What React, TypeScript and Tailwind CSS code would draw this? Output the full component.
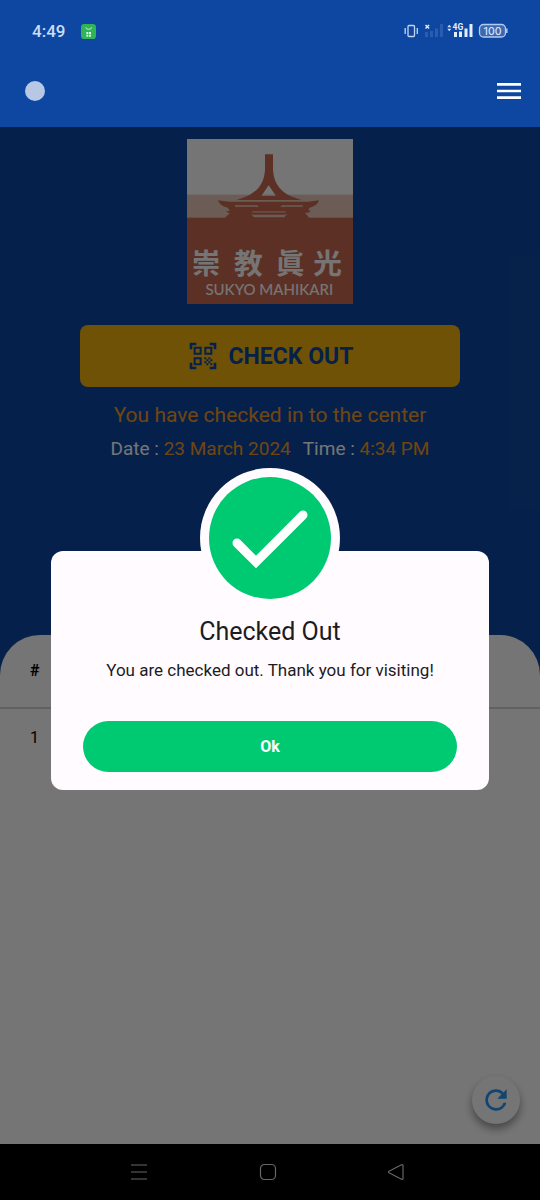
import React from "react";
import { MdMenu, MdQrCodeScanner, MdRefresh } from "react-icons/md";

function StatusIcons() {
  return (
    <svg width="104" height="18" viewBox="0 0 104 18" fill="none" aria-label="Vibrate, signal, battery 100">
      <g stroke="#c3d5f2" strokeWidth="1.3">
        <rect x="4" y="3.5" width="6.5" height="11" rx="1" />
        <path d="M1.2 6v6M13.3 6v6" />
      </g>
      <path d="M21.5 3l3.6 3.6M25.1 3l-3.6 3.6" stroke="#e3edfb" strokeWidth="1.4" />
      <g fill="#2a5db0">
        <rect x="21" y="10" width="3" height="5" />
        <rect x="26" y="9" width="3" height="6" />
        <rect x="31" y="6.5" width="3" height="8.5" />
        <rect x="36" y="2" width="3" height="13" />
      </g>
      <path d="M43.3 5.2l2-2.5 2 2.5zM43.3 6.8l2 2.5 2-2.5z" fill="#dbe7fa" />
      <text x="48.5" y="8" fontSize="8.5" fontWeight="700" fontFamily="Roboto, sans-serif" fill="#e3edfb">4G</text>
      <g fill="#e3edfb">
        <rect x="50" y="10" width="3" height="5" />
        <rect x="55" y="9.5" width="3" height="5.5" />
        <rect x="60.5" y="6.5" width="3" height="8.5" />
        <rect x="65.5" y="2" width="3" height="13" />
      </g>
      <rect x="75.5" y="2.5" width="26" height="12.5" rx="4" stroke="#b4c9ec" strokeWidth="1.3" fill="#3c68b3" />
      <path d="M102.8 6.5v4.5" stroke="#b4c9ec" strokeWidth="1.5" />
      <text x="88.5" y="12.6" textAnchor="middle" fontSize="10.5" fontWeight="500" fontFamily="Inter, sans-serif" fill="#d6e3f7">100</text>
    </svg>
  );
}

function AppBadge() {
  return (
    <svg width="15" height="15" viewBox="0 0 45 45" aria-hidden="true">
      <rect width="45" height="45" rx="10" fill="#2fb457" />
      <path d="M14 10q1 6 9 6t9-6" stroke="#c5f0cc" strokeWidth="3" fill="none" />
      <g fill="#e2f8e4">
        <rect x="16" y="24" width="6" height="6" />
        <rect x="24" y="24" width="6" height="6" />
        <rect x="16" y="32" width="6" height="6" />
        <rect x="24" y="32" width="6" height="6" />
      </g>
    </svg>
  );
}

function Logo() {
  return (
    <svg className="h-[165px] w-[166px]" viewBox="0 0 498 495" role="img" aria-label="Sukyo Mahikari">
      <rect width="498" height="495" fill="#fff" />
      <rect y="167" width="498" height="70" fill="#ecc9bb" />
      <rect y="236" width="498" height="259" fill="#c96a50" />
      <path
        fill="#c96a50"
        fillRule="evenodd"
        d="M234 46h24v46c2 45 28 72 68 85l17 6H149l17-6c40-13 66-40 68-85zM245 139l-22 32h44z"
      />
      <path
        fill="#c96a50"
        d="M93 184l34 4h237l32-4c-4 12-13 19-28 22l-4 8 8 1-8 6h-10l13 16H113l16-15h-4l-8-5 12-2-7-9c-14-3-25-10-29-22z"
      />
      <path d="M144 199h66l5 5h-8l-4-1h-59zM347 199h-61l-6 5h8l5-1h54z" fill="#ecc9bb" />
      <path d="M196 216h100v5H196z" fill="#ecc9bb" opacity=".6" />
      <path d="M192 225l9 10h91l9-10-6 2H198z" fill="#ecc9bb" />
      <g fill="#fff" fontFamily="'Noto Sans CJK TC', 'Noto Sans CJK JP', sans-serif" fontWeight="700" fontSize="86" textAnchor="middle">
        <text x="57" y="404">崇</text>
        <text x="184" y="404">教</text>
        <text x="309" y="404">眞</text>
        <text x="422" y="404">光</text>
      </g>
      <text x="247" y="467" textAnchor="middle" fontFamily="Lato, sans-serif" fontWeight="500" fontSize="45" fill="#fff">
        SUKYO MAHIKARI
      </text>
    </svg>
  );
}

function CheckBadge() {
  return (
    <div className="-mt-[83px] flex size-[140px] items-center justify-center rounded-full bg-[#fffbff]">
      <svg className="size-[122px]" viewBox="0 0 122 122" aria-hidden="true">
        <circle cx="61" cy="61" r="61" fill="#00ca71" />
        <path d="M28 66l19 19 47-47" fill="none" stroke="#fff" strokeWidth="9" strokeLinecap="round" />
      </svg>
    </div>
  );
}

function CheckedOutDialog() {
  return (
    <div className="absolute inset-0 flex flex-col items-center bg-black/54 px-[51px] pt-[424px]">
      <div role="dialog" aria-labelledby="dialog-title" className="flex w-full flex-col items-center rounded-xl bg-[#fffbff] px-8 pb-[18px]">
        <CheckBadge />
        <h2 id="dialog-title" className="mt-2 text-[25px] leading-8 text-[#1d1b1e]">Checked Out</h2>
        <p className="mt-2.5 text-[17px] leading-6 whitespace-nowrap text-[#1d1b1e]">You are checked out. Thank you for visiting!</p>
        <button className="mt-[39px] h-[51px] w-full rounded-full bg-[#00ca71] text-base font-bold text-white">Ok</button>
      </div>
    </div>
  );
}

export default function App() {
  return (
    <div className="flex min-h-screen flex-col bg-[#0d47a1] font-['Roboto',sans-serif]">
      <header className="pb-5">
        <div className="flex h-[62px] items-center justify-between pr-8 pl-8">
          <div className="flex items-center gap-4">
            <span className="text-[17px] leading-6 font-medium text-[#cbdcf6]">4:49</span>
            <AppBadge />
          </div>
          <StatusIcons />
        </div>
        <div className="flex h-[45px] items-end justify-between pr-[15px] pl-[25px]">
          <span className="mb-1.5 size-5 rounded-full bg-[#b6c8e3]" />
          <button aria-label="Menu" className="text-white">
            <MdMenu size={32} />
          </button>
        </div>
      </header>

      <main className="relative flex flex-1 flex-col overflow-hidden">
        <div className="flex h-[508px] flex-col items-center px-20 pt-3">
          <Logo />
          <button className="mt-[21px] flex h-[62px] w-full items-center justify-center gap-2.5 rounded-lg bg-[#f2b30f] text-[23px] font-bold text-[#0d47a1]">
            <MdQrCodeScanner size={32} />
            <span className="pt-0.5">CHECK OUT</span>
          </button>
          <p className="mt-4 text-[21px] leading-6 whitespace-nowrap text-[#f29a24]">You have checked in to the center</p>
          <p className="mt-2.5 flex gap-3 text-[19px] leading-6 whitespace-nowrap text-[#f29a24]">
            <span><span className="text-white">Date : </span>23 March 2024</span>
            <span><span className="text-white">Time : </span>4:34 PM</span>
          </p>
        </div>

        <section className="flex-1 rounded-t-[40px] bg-white shadow-[0_0_8px_#124fa8]">
          <table className="w-full text-left text-base text-black">
            <thead>
              <tr className="h-[73px] border-b-2 border-[#d4d4d4]">
                <th className="pl-[30px] font-bold">#</th>
              </tr>
            </thead>
            <tbody>
              <tr className="h-[58px]">
                <td className="pl-[30px]">1</td>
              </tr>
            </tbody>
          </table>
        </section>

        <button aria-label="Refresh" className="absolute right-5 bottom-5 flex size-12 items-center justify-center rounded-full bg-white text-[#2196f3] shadow-[0_5px_9px_rgba(0,0,0,0.4)]">
          <MdRefresh size={32} />
        </button>
        <CheckedOutDialog />
      </main>

      <nav aria-label="System" className="flex h-14 items-center justify-between bg-black pr-[135px] pl-[130px] text-[#666]">
        <button aria-label="Recents">
          <svg width="18" height="18" viewBox="0 0 18 18" stroke="currentColor" strokeWidth="1.2"><path d="M1 2h16M1 9h16M1 16h16" /></svg>
        </button>
        <button aria-label="Home">
          <svg width="18" height="18" viewBox="0 0 18 18" fill="none" stroke="currentColor" strokeWidth="1.2"><rect x="1.5" y="1.5" width="15" height="15" rx="4" /></svg>
        </button>
        <button aria-label="Back">
          <svg width="18" height="18" viewBox="0 0 18 18" fill="none" stroke="currentColor" strokeWidth="1.2" strokeLinejoin="round"><path d="M2 8.3L14.5 1.8q1.5-.5 1.5 1v12.4q0 1.500-1.500 1L2 9.700q-1-.7 0-1.400z" /></svg>
        </button>
      </nav>
    </div>
  );
}
